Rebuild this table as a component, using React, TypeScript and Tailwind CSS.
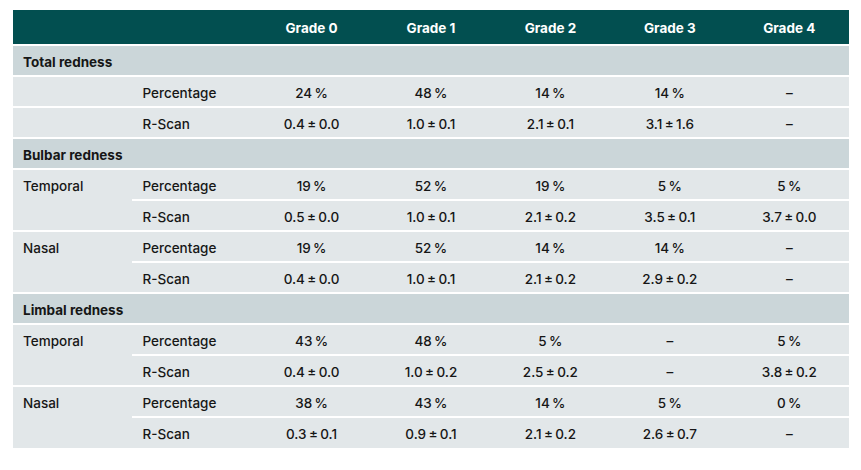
type Row = { label: string; values: string[] }
type Group = { site: string; rows: Row[] }
type Section = { title: string; groups: Group[] }

const pm = (a: string, b: string) => `${a}\u2009±\u2009${b}`
const pc = (a: string) => `${a}\u2009%`
const dash = '–'

const sections: Section[] = [
  {
    title: 'Total redness',
    groups: [
      {
        site: '',
        rows: [
          { label: 'Percentage', values: [pc('24'), pc('48'), pc('14'), pc('14'), dash] },
          { label: 'R-Scan', values: [pm('0.4', '0.0'), pm('1.0', '0.1'), pm('2.1', '0.1'), pm('3.1', '1.6'), dash] },
        ],
      },
    ],
  },
  {
    title: 'Bulbar redness',
    groups: [
      {
        site: 'Temporal',
        rows: [
          { label: 'Percentage', values: [pc('19'), pc('52'), pc('19'), pc('5'), pc('5')] },
          { label: 'R-Scan', values: [pm('0.5', '0.0'), pm('1.0', '0.1'), pm('2.1', '0.2'), pm('3.5', '0.1'), pm('3.7', '0.0')] },
        ],
      },
      {
        site: 'Nasal',
        rows: [
          { label: 'Percentage', values: [pc('19'), pc('52'), pc('14'), pc('14'), dash] },
          { label: 'R-Scan', values: [pm('0.4', '0.0'), pm('1.0', '0.1'), pm('2.1', '0.2'), pm('2.9', '0.2'), dash] },
        ],
      },
    ],
  },
  {
    title: 'Limbal redness',
    groups: [
      {
        site: 'Temporal',
        rows: [
          { label: 'Percentage', values: [pc('43'), pc('48'), pc('5'), dash, pc('5')] },
          { label: 'R-Scan', values: [pm('0.4', '0.0'), pm('1.0', '0.2'), pm('2.5', '0.2'), dash, pm('3.8', '0.2')] },
        ],
      },
      {
        site: 'Nasal',
        rows: [
          { label: 'Percentage', values: [pc('38'), pc('43'), pc('14'), pc('5'), pc('0')] },
          { label: 'R-Scan', values: [pm('0.3', '0.1'), pm('0.9', '0.1'), pm('2.1', '0.2'), pm('2.6', '0.7'), dash] },
        ],
      },
    ],
  },
]

const grades = ['Grade 0', 'Grade 1', 'Grade 2', 'Grade 3', 'Grade 4']

export default function App() {
  return (
    <div className="bg-white w-[861px] h-[470px] pt-[10px] pl-[13px] font-['Inter',sans-serif] text-[13.5px] text-[#161616]">
      <table className="w-[836px] border-collapse table-fixed">
        <colgroup>
          {Array.from({ length: 7 }).map((_, i) => (
            <col key={i} className="w-[119.43px]" />
          ))}
        </colgroup>
        <thead>
          <tr className="bg-[#024f50] h-[35px]">
            <th />
            <th />
            {grades.map(g => (
              <th key={g} className="text-center font-bold text-white pt-[2px]">{g}</th>
            ))}
          </tr>
        </thead>
        <tbody>
          {sections.map(sec => (
            <SectionRows key={sec.title} section={sec} />
          ))}
        </tbody>
      </table>
    </div>
  )
}

function SectionRows({ section }: { section: Section }) {
  return (
    <>
      <tr className="bg-[#cbd6d9] h-[31px]">
        <td colSpan={7} className="border-t-2 border-white px-[10px] pt-[3px] font-bold align-middle">
          {section.title}
        </td>
      </tr>
      {section.groups.map((g, gi) =>
        g.rows.map((r, ri) => (
          <tr key={`${gi}-${ri}`} className="bg-[#e2e7e9] h-[31px]">
            {g.site ? (
              ri === 0 && (
                <td rowSpan={2} className="border-t-2 border-white px-[10px] align-top pt-[6px] font-medium">
                  {g.site}
                </td>
              )
            ) : (
              <td className="border-t-2 border-white" />
            )}
            <td className="border-t-2 border-white px-[10px] pt-[3px] font-medium">{r.label}</td>
            {r.values.map((v, vi) => (
              <td key={vi} className="border-t-2 border-white pt-[3px] text-center font-medium whitespace-nowrap">
                {v}
              </td>
            ))}
          </tr>
        ))
      )}
    </>
  )
}
